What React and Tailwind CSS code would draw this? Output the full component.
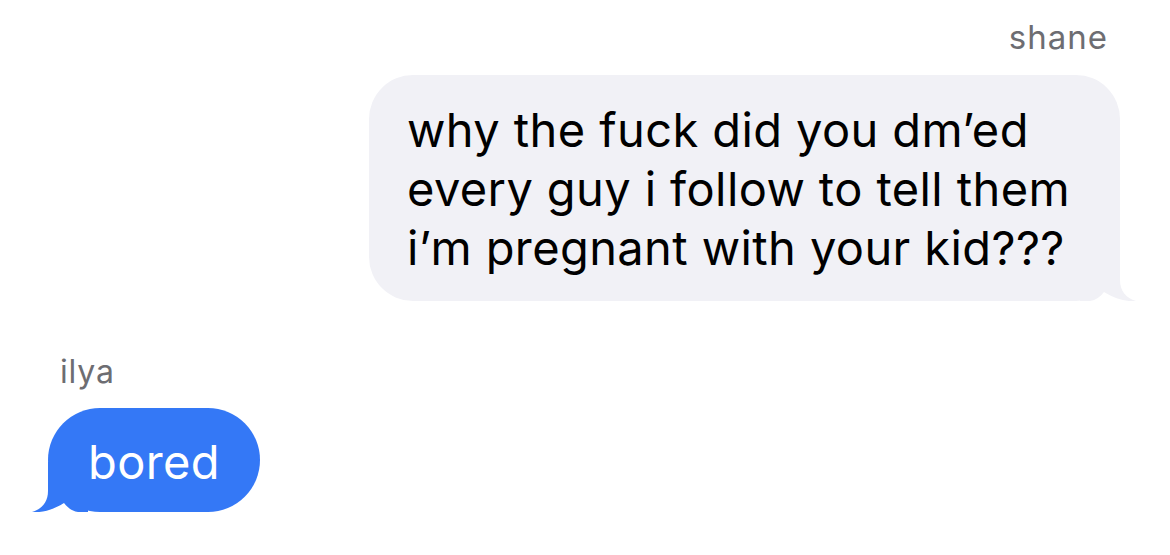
import React from 'react';

const Tail = ({ color, flip }) => (
  <svg
    width="60"
    height="50"
    viewBox="0 0 60 50"
    className={`absolute bottom-0 ${flip ? '-left-[20px] -scale-x-100' : '-right-[20px]'}`}
  >
    <path
      d="M0,0 H40 V29 C40,40 46,47 56,50 C47,51 35,48 24,41 C20,46 16,49 10,50 H0 Z"
      fill={color}
    />
  </svg>
);

const App = () => {
  return (
    <div
      className="w-full h-[555px] bg-white overflow-hidden text-black"
      style={{ fontFamily: 'Inter, "Noto Sans", sans-serif' }}
    >
      <div className="flex flex-col items-end pr-[50px] pt-[18px]">
        <p className="text-[33px] leading-[38px] text-[#6d6d72] pr-[12px] tracking-[1px]">shane</p>
        <div className="relative mt-[19px] w-[751px] rounded-[44px] bg-[#f1f1f6] pl-[38px] pt-[25px] pb-[24px] text-[47px] leading-[59px] tracking-[0.4px]">
          why the fuck did you dm’ed
          <br />
          every guy i follow to tell them
          <br />
          i’m pregnant with your kid???
          <Tail color="#f1f1f6" />
        </div>
      </div>

      <div className="flex flex-col items-start pl-[48px] mt-[52px]">
        <p className="text-[32px] leading-[38px] text-[#6d6d72] pl-[12px] tracking-[0.8px]">ilya</p>
        <div className="relative mt-[17px] rounded-[52px] bg-[#3478f6] px-[40px] pt-[24px] pb-[21px] text-[47px] leading-[59px] tracking-[0.4px] text-white">
          bored
          <Tail color="#3478f6" flip />
        </div>
      </div>
    </div>
  );
};

export default App;
